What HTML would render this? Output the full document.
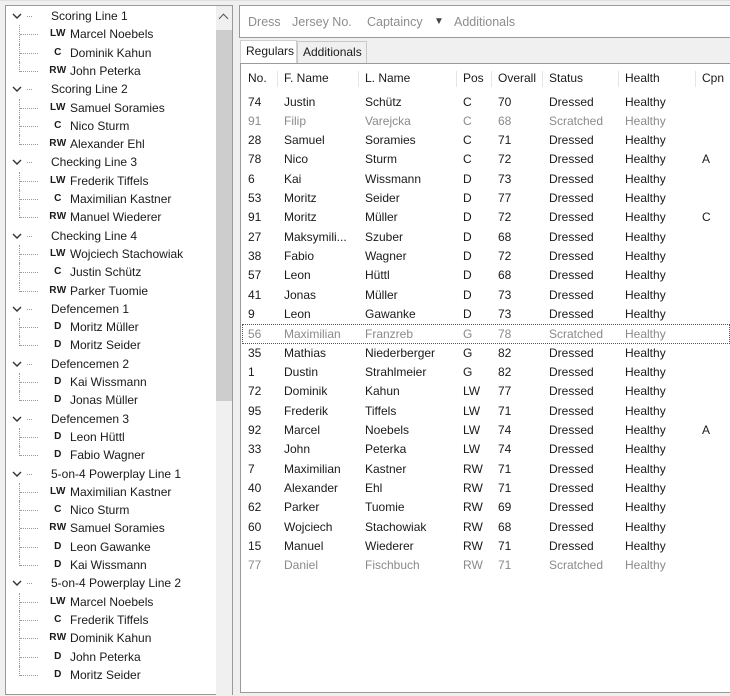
<!DOCTYPE html><html><head><meta charset="utf-8"><style>
*{margin:0;padding:0;box-sizing:border-box}
body{width:730px;height:685px;background:#f0f0f0;font-family:"Liberation Sans",sans-serif;font-size:12px;color:#1a1a1a;position:relative;overflow:hidden}
.abs{position:absolute}
#tree{left:5px;top:5px;width:228px;height:690px;background:#fff;border:1px solid #9a9a9a}
.tr{position:absolute;left:0;height:18.3px;line-height:18px;white-space:nowrap}
.code{position:absolute;left:42px;width:20px;text-align:center;font-weight:bold;font-size:10px;letter-spacing:0.5px}
.nm{position:absolute;left:64px}
.vl{position:absolute;left:13px;width:0;border-left:1px dotted #999}
.hl{position:absolute;left:14px;top:9px;width:18px;border-top:1px dotted #999}
.chev{position:absolute;left:6px;top:6px}
#tb{left:239px;top:5px;width:495px;height:33px;background:#fff;border:1px solid #9a9a9a;color:#8d8d8d;font-size:12.5px}
#list{left:240px;top:63px;width:495px;height:630px;background:#fff;border:1px solid #9a9a9a}
.row{position:absolute;left:0;width:495px;height:19.33px;line-height:19px;white-space:nowrap}
.row span{position:absolute}
.g{color:#8a8a8a}
</style></head><body>
<div id="tree" class="abs"></div>
<div class="abs" style="left:216px;top:6px;width:16px;height:690px;background:#f0f0f0"></div>
<div class="abs" style="left:216px;top:30px;width:16px;height:371px;background:#cdcdcd"></div>
<div class="abs" style="left:220px;top:15px;width:7px;height:7px;border-left:1.5px solid #555;border-top:1.5px solid #555;transform:rotate(45deg)"></div>
<div class="abs" style="left:0;top:0;width:730px;height:1px;background:#e0e0e0"></div>
<div id="tb" class="abs"><span class="abs" style="left:8px;top:9px">Dress</span><span class="abs" style="left:52px;top:9px">Jersey No.</span><span class="abs" style="left:127px;top:9px">Captaincy</span><span class="abs" style="left:194px;top:10px;color:#444;font-size:10px">▼</span><span class="abs" style="left:214px;top:9px">Additionals</span></div>
<div class="abs" style="left:240px;top:40px;width:57px;height:24px;background:#fff;border:1px solid #d0d0d0;border-bottom:none;padding:3px 0 0 5px">Regulars</div>
<div class="abs" style="left:297px;top:41px;width:70px;height:22px;background:#f0f0f0;border:1px solid #c8c8c8;border-bottom:none;padding:3px 0 0 5px">Additionals</div>
<div id="list" class="abs"></div>
<div id="tree-c" class="abs" style="left:6px;top:7px;width:210px;height:680px"></div>
<div id="tbl" class="abs" style="left:241px;top:64px;width:489px;height:621px"></div>
<script>
var T=[["Scoring Line 1",[["LW","Marcel Noebels"],["C","Dominik Kahun"],["RW","John Peterka"]]],["Scoring Line 2",[["LW","Samuel Soramies"],["C","Nico Sturm"],["RW","Alexander Ehl"]]],["Checking Line 3",[["LW","Frederik Tiffels"],["C","Maximilian Kastner"],["RW","Manuel Wiederer"]]],["Checking Line 4",[["LW","Wojciech Stachowiak"],["C","Justin Schütz"],["RW","Parker Tuomie"]]],["Defencemen 1",[["D","Moritz Müller"],["D","Moritz Seider"]]],["Defencemen 2",[["D","Kai Wissmann"],["D","Jonas Müller"]]],["Defencemen 3",[["D","Leon Hüttl"],["D","Fabio Wagner"]]],["5-on-4 Powerplay Line 1",[["LW","Maximilian Kastner"],["C","Nico Sturm"],["RW","Samuel Soramies"],["D","Leon Gawanke"],["D","Kai Wissmann"]]],["5-on-4 Powerplay Line 2",[["LW","Marcel Noebels"],["C","Frederik Tiffels"],["RW","Dominik Kahun"],["D","John Peterka"],["D","Moritz Seider"]]]];
var h="",i=0,H=18.3;
T.forEach(function(g){var y=i*H;h+='<div class="tr" style="top:'+y+'px;width:210px"><svg class="chev" width="10" height="6" viewBox="0 0 10 6"><polyline points="1,1 5,5 9,1" fill="none" stroke="#333" stroke-width="1.4"/></svg><div class="abs" style="left:21px;top:9px;width:5px;border-top:1px dotted #999"></div><span class="abs" style="left:45px">'+g[0]+'</span></div>';i++;
g[1].forEach(function(c,k){var y=i*H,last=k==g[1].length-1;h+='<div class="tr" style="top:'+y+'px;width:210px"><div class="vl" style="top:0;height:'+(last?10:18.3)+'px"></div><div class="hl"></div><span class="code">'+c[0]+'</span><span class="nm">'+c[1]+'</span></div>';i++;});});
document.getElementById("tree-c").innerHTML=h;
var X=[7,43,124,222,257,308,384,461];
var R=[["74","Justin","Schütz","C","70","Dressed","Healthy",""],["91","Filip","Varejcka","C","68","Scratched","Healthy","",1],["28","Samuel","Soramies","C","71","Dressed","Healthy",""],["78","Nico","Sturm","C","72","Dressed","Healthy","A"],["6","Kai","Wissmann","D","73","Dressed","Healthy",""],["53","Moritz","Seider","D","77","Dressed","Healthy",""],["91","Moritz","Müller","D","72","Dressed","Healthy","C"],["27","Maksymili...","Szuber","D","68","Dressed","Healthy",""],["38","Fabio","Wagner","D","72","Dressed","Healthy",""],["57","Leon","Hüttl","D","68","Dressed","Healthy",""],["41","Jonas","Müller","D","73","Dressed","Healthy",""],["9","Leon","Gawanke","D","73","Dressed","Healthy",""],["56","Maximilian","Franzreb","G","78","Scratched","Healthy","",2],["35","Mathias","Niederberger","G","82","Dressed","Healthy",""],["1","Dustin","Strahlmeier","G","82","Dressed","Healthy",""],["72","Dominik","Kahun","LW","77","Dressed","Healthy",""],["95","Frederik","Tiffels","LW","71","Dressed","Healthy",""],["92","Marcel","Noebels","LW","74","Dressed","Healthy","A"],["33","John","Peterka","LW","74","Dressed","Healthy",""],["7","Maximilian","Kastner","RW","71","Dressed","Healthy",""],["40","Alexander","Ehl","RW","71","Dressed","Healthy",""],["62","Parker","Tuomie","RW","69","Dressed","Healthy",""],["60","Wojciech","Stachowiak","RW","68","Dressed","Healthy",""],["15","Manuel","Wiederer","RW","71","Dressed","Healthy",""],["77","Daniel","Fischbuch","RW","71","Scratched","Healthy","",1]];
var hd=["No.","F. Name","L. Name","Pos","Overall","Status","Health","Cpn"];
var s='<div class="row" style="top:5px">';hd.forEach(function(t,j){s+='<span style="left:'+X[j]+'px">'+t+'</span>'});
[36,117,215,250,301,377,454].forEach(function(x){s+='<span style="left:'+x+'px;top:2px;width:1px;height:16px;background:#e5e5e5"></span>'});s+='</div>';
R.forEach(function(r,k){var y=28.5+k*19.33;s+='<div class="row'+(r[8]?' g':'')+'" style="top:'+y+'px'+(r[8]==2?';border:1px dotted #555;left:1px;width:488px':'')+'">';for(var j=0;j<8;j++)s+='<span style="left:'+(X[j]-(r[8]==2?2:0))+'px">'+r[j]+'</span>';s+='</div>'});
document.getElementById("tbl").innerHTML=s;
</script>
</body></html>
